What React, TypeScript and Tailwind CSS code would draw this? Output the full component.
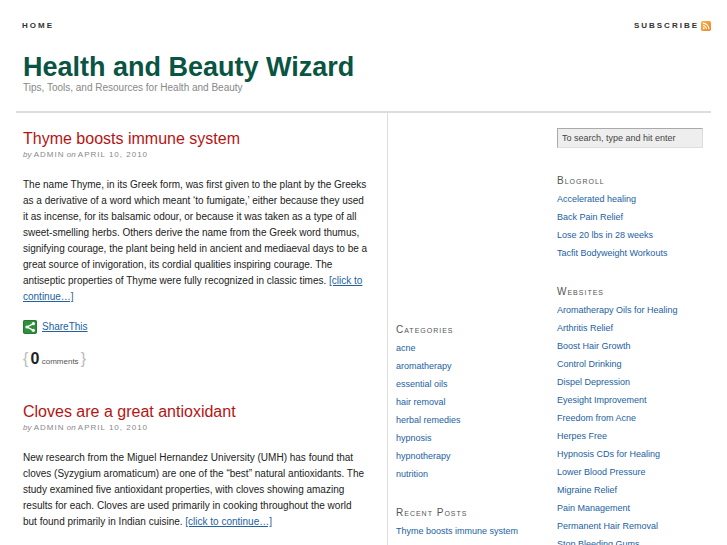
import React, { useState } from 'react';

interface Post {
  id: number;
  title: string;
  author: string;
  date: string;
  excerpt: string;
  comments: number;
}

const POSTS: Post[] = [
  {
    id: 1,
    title: 'Thyme boosts immune system',
    author: 'Admin',
    date: 'April 10, 2010',
    excerpt:
      'The name Thyme, in its Greek form, was first given to the plant by the Greeks as a derivative of a word which meant ‘to fumigate,’ either because they used it as incense, for its balsamic odour, or because it was taken as a type of all sweet-smelling herbs. Others derive the name from the Greek word thumus, signifying courage, the plant being held in ancient and mediaeval days to be a great source of invigoration, its cordial qualities inspiring courage. The antiseptic properties of Thyme were fully recognized in classic times.',
    comments: 0,
  },
  {
    id: 2,
    title: 'Cloves are a great antioxidant',
    author: 'Admin',
    date: 'April 10, 2010',
    excerpt:
      'New research from the Miguel Hernandez University (UMH) has found that cloves (Syzygium aromaticum) are one of the “best” natural antioxidants. The study examined five antioxidant properties, with cloves showing amazing results for each. Cloves are used primarily in cooking throughout the world but found primarily in Indian cuisine.',
    comments: 0,
  },
];

const CATEGORIES = [
  'acne',
  'aromatherapy',
  'essential oils',
  'hair removal',
  'herbal remedies',
  'hypnosis',
  'hypnotherapy',
  'nutrition',
];

const RECENT_POSTS = ['Thyme boosts immune system'];

const BLOGROLL = ['Accelerated healing', 'Back Pain Relief', 'Lose 20 lbs in 28 weeks', 'Tacfit Bodyweight Workouts'];

const WEBSITES = [
  'Aromatherapy Oils for Healing',
  'Arthritis Relief',
  'Boost Hair Growth',
  'Control Drinking',
  'Dispel Depression',
  'Eyesight Improvement',
  'Freedom from Acne',
  'Herpes Free',
  'Hypnosis CDs for Healing',
  'Lower Blood Pressure',
  'Migraine Relief',
  'Pain Management',
  'Permanent Hair Removal',
  'Stop Bleeding Gums',
];

const RssIcon = () => (
  <svg width="10" height="10" viewBox="0 0 11 11" aria-hidden="true">
    <defs>
      <linearGradient id="rss" x1="0" y1="0" x2="1" y2="1">
        <stop offset="0" stopColor="#f9b04e" />
        <stop offset="1" stopColor="#ee8420" />
      </linearGradient>
    </defs>
    <rect width="11" height="11" rx="2" fill="url(#rss)" />
    <circle cx="3" cy="8" r="1" fill="#fff" />
    <path d="M2 5a4 4 0 0 1 4 4M2 2.3A6.7 6.7 0 0 1 8.7 9" fill="none" stroke="#fff" strokeWidth="1.2" />
  </svg>
);

const ShareIcon = () => (
  <svg width="14" height="14" viewBox="0 0 13 13" aria-hidden="true">
    <rect width="13" height="13" rx="2" fill="#2f8f3a" />
    <rect x="0.5" y="0.5" width="12" height="12" rx="1.5" fill="none" stroke="#237a30" />
    <path d="M9.7 3.3 3.7 6.5l6 3.2" fill="none" stroke="#fff" strokeWidth="1.3" />
    <circle cx="9.6" cy="3.4" r="1.5" fill="#fff" />
    <circle cx="3.7" cy="6.5" r="1.5" fill="#fff" />
    <circle cx="9.6" cy="9.6" r="1.5" fill="#fff" />
  </svg>
);

const PostEntry: React.FC<{ post: Post }> = ({ post }) => (
  <article className="mb-8">
    <h2 className="text-[16px] leading-5 text-[#b51414]">
      <a href="#">{post.title}</a>
    </h2>
    <p className="text-[8px] leading-3 text-[#888]">
      <em>by</em> <span className="tracking-[1px] uppercase">{post.author}</span> <em>on</em>{' '}
      <span className="tracking-[1px] uppercase">{post.date}</span>
    </p>
    <p className="mt-4 text-[10px] leading-4 text-[#222]">
      {post.excerpt}{' '}
      <a href="#" className="text-[#2361a1] underline">[click to continue…]</a>
    </p>
    <a href="#" className="mt-[14px] flex items-center gap-[5px] text-[10px] leading-4 text-[#2361a1] underline">
      <ShareIcon />
      ShareThis
    </a>
    <p className="mt-4 text-[8px] leading-4 text-[#555]">
      <span className="text-[16px] text-[#bbb]">{'{'}</span>{' '}
      <a href="#">
        <span className="text-[16px] font-bold text-[#222]">{post.comments}</span> comments
      </a>{' '}
      <span className="text-[16px] text-[#bbb]">{'}'}</span>
    </p>
  </article>
);

const LinkList: React.FC<{ title: string; links: string[] }> = ({ title, links }) => (
  <section className="mb-[21px]">
    <h3 className="text-[10px] leading-[18px] tracking-[1px] text-[#555] [font-variant:small-caps]">{title}</h3>
    <ul className="text-[9px] leading-[18px] text-[#2361a1]">
      {links.map(link => (
        <li key={link}>
          <a href="#" className="hover:underline">{link}</a>
        </li>
      ))}
    </ul>
  </section>
);

const App: React.FC = () => {
  const [query, setQuery] = useState('To search, type and hit enter');

  return (
    <div className="bg-white px-4 font-['Liberation_Sans',Arial,sans-serif]">
      <nav className="flex items-center justify-between pt-5 pl-[6px] text-[8px] leading-3 font-bold tracking-[2px] text-[#333] uppercase">
        <a href="#">Home</a>
        <a href="#" className="flex items-center gap-[2px]">
          Subscribe
          <RssIcon />
        </a>
      </nav>

      <header className="border-b-2 border-[#ddd] pt-5 pb-[17px] pl-[7px]">
        <h1 className="text-[27px] leading-[30px] font-bold text-[#095443]">
          <a href="#">Health and Beauty Wizard</a>
        </h1>
        <p className="text-[10px] leading-3 text-[#888]">Tips, Tools, and Resources for Health and Beauty</p>
      </header>

      <div className="grid grid-cols-[372fr_323fr]">
        <main className="border-r border-[#ddd] pt-4 pr-[19px] pl-[7px]">
          {POSTS.map(post => (
            <PostEntry key={post.id} post={post} />
          ))}
        </main>

        <div className="grid grid-cols-[161fr_162fr]">
          <aside className="px-2 pt-52">
            <LinkList title="Categories" links={CATEGORIES} />
            <LinkList title="Recent Posts" links={RECENT_POSTS} />
          </aside>
          <aside className="px-2 pt-[15px]">
            <form className="mb-6" onSubmit={e => e.preventDefault()}>
              <input
                type="text"
                aria-label="Search"
                value={query}
                onChange={e => setQuery(e.target.value)}
                className="block h-5 w-full border border-[#ddd] border-t-[#aaa] border-l-[#aaa] bg-[#eee] px-1 text-[9px] text-[#444]"
              />
            </form>
            <LinkList title="Blogroll" links={BLOGROLL} />
            <LinkList title="Websites" links={WEBSITES} />
          </aside>
        </div>
      </div>
    </div>
  );
};

export default App;
